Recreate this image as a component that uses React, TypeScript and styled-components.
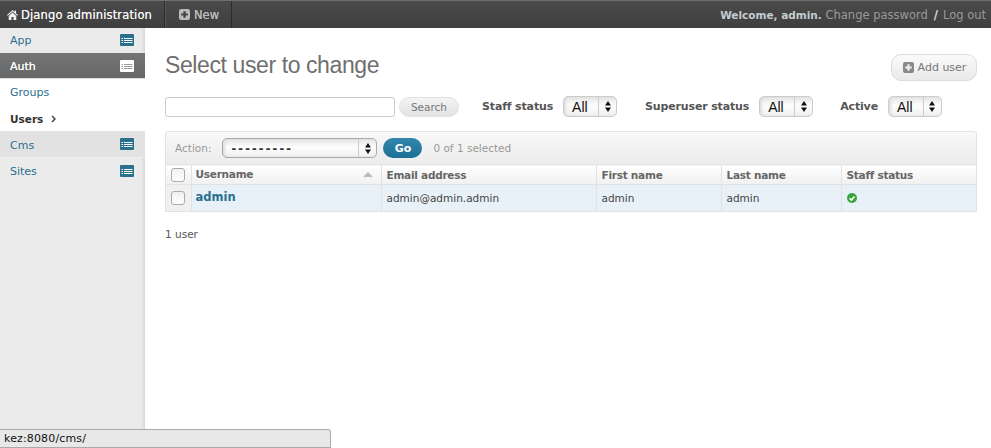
import styled, { createGlobalStyle } from 'styled-components';

const GlobalStyle = createGlobalStyle`
  html, body {
    margin: 0;
    padding: 0;
    height: 100%;
    background: #fff;
    overflow: hidden;
  }
  #root {
    height: 100%;
  }
  * {
    box-sizing: border-box;
  }
`;

const Page = styled.div`
  width: 991px;
  height: 448px;
  position: relative;
  overflow: hidden;
  display: flex;
  flex-direction: column;
  font-family: 'DejaVu Sans', Verdana, sans-serif;
  font-size: 11px;
  color: #444;
`;

const TopBar = styled.header`
  height: 28px;
  flex: none;
  display: flex;
  align-items: center;
  background: linear-gradient(#4a4a4a, #3f3f3f);
  border-top: 1px solid #6e6e6e;
  color: #eee;
`;

const Brand = styled.div`
  width: 165px;
  height: 100%;
  padding-left: 7px;
  display: flex;
  align-items: center;
  gap: 3px;
  font-size: 11.5px;
  letter-spacing: 0.15px;
  color: #f4f4f4;
  text-shadow: 0 0 0.6px #f4f4f4;
  border-right: 1px solid #2b2b2b;
`;

const NewLink = styled.div`
  width: 67px;
  height: 100%;
  display: flex;
  align-items: center;
  gap: 4px;
  padding-left: 13px;
  font-size: 11.5px;
  color: #bbb;
  text-shadow: 0 0 0.5px #bbb;
  border-left: 1px solid #555;
  border-right: 1px solid #2b2b2b;
`;

const UserTools = styled.div`
  margin-left: auto;
  padding-right: 5px;
  font-size: 11.5px;
  color: #999;
  white-space: nowrap;
`;

const Welcome = styled.span`
  font-weight: 700;
  color: #c4ccd0;
  font-size: 10.5px;
`;

const Slash = styled.span`
  color: #ddd;
  font-weight: 700;
  margin: 0 5px 0 6px;
`;

const Body = styled.div`
  flex: 1;
  display: flex;
  min-height: 0;
`;

const Sidebar = styled.nav`
  width: 145px;
  flex: none;
  background: #ebebeb;
  box-shadow: inset -4px 0 4px -3px #ccc;
`;

const NavRow = styled.div<{ $kind?: 'active' | 'child' | 'hover' }>`
  height: ${(p) => (p.$kind === 'hover' ? 27 : 26)}px;
  display: flex;
  align-items: center;
  justify-content: space-between;
  padding: 2px 11px 0 10px;
  font-size: 11px;
  color: ${(p) => (p.$kind === 'active' ? '#fff' : '#29708f')};
  text-shadow: ${(p) => (p.$kind === 'active' ? '0 0 0.5px #fff' : 'none')};
  background: ${(p) =>
    p.$kind === 'active'
      ? 'linear-gradient(#757575, #666)'
      : p.$kind === 'child'
        ? '#fff'
        : p.$kind === 'hover'
          ? '#e2e2e2'
          : 'transparent'};
  border-bottom: 1px solid
    ${(p) => (p.$kind === 'active' ? '#ddd' : p.$kind === 'hover' ? '#eee' : 'transparent')};
  & > svg {
    margin-top: -2px;
  }
  &:first-child {
    height: 25px;
    padding-top: 0;
  }
  &:first-child > svg {
    margin-top: 0;
  }
`;

const CurrentLink = styled.span`
  display: flex;
  align-items: center;
  gap: 8px;
  font-weight: 700;
  color: #333;
  font-size: 10.5px;
`;

const Content = styled.main`
  flex: 1;
  padding: 26px 14px 0 20px;
`;

const TitleRow = styled.div`
  display: flex;
  justify-content: space-between;
  align-items: flex-start;
  height: 42px;
`;

const Title = styled.h1`
  margin: 0;
  font-family: 'Liberation Sans', Arial, sans-serif;
  font-weight: 400;
  font-size: 23px;
  line-height: 22px;
  color: #6f6f6f;
  letter-spacing: -0.4px;
`;

const AddButton = styled.div`
  width: 86px;
  height: 27px;
  display: flex;
  align-items: center;
  justify-content: center;
  gap: 4px;
  padding-left: 1px;
  border: 1px solid #ddd;
  border-radius: 10px;
  background: linear-gradient(#fbfbfb, #e9e9e9);
  color: #777;
  font-size: 11px;
`;

const FilterRow = styled.div`
  height: 21px;
  display: flex;
  align-items: center;
  margin-bottom: 14px;
`;

const SearchInput = styled.input`
  width: 230px;
  height: 20px;
  border: 1px solid #ccc;
  border-radius: 3px;
  background: #fff;
  padding: 0 4px;
`;

const SearchButton = styled.div`
  width: 60px;
  height: 20px;
  margin-left: 4px;
  display: flex;
  align-items: center;
  justify-content: center;
  border-radius: 10px;
  border: 1px solid #e2e2e2;
  background: linear-gradient(#f4f4f4, #e2e2e2);
  color: #777;
  font-size: 10.5px;
`;

const FilterLabel = styled.span<{ $gap: number }>`
  margin-left: ${(p) => p.$gap}px;
  margin-right: 10px;
  font-weight: 700;
  font-size: 11px;
  letter-spacing: -0.15px;
  color: #555;
  white-space: nowrap;
`;

const SelectBox = styled.div`
  width: 54px;
  height: 21px;
  display: flex;
  align-items: stretch;
  border: 1px solid #ccc;
  border-radius: 5px;
  background: linear-gradient(#e4e4e4, #fdfdfd 45%, #f0f0f0);
  box-shadow: inset 2px 0 3px #ddd;
  font-family: 'Liberation Sans', Arial, sans-serif;
  font-size: 14px;
  color: #111;
`;

const SelectValue = styled.span`
  flex: 1;
  display: flex;
  align-items: center;
  padding-left: 8px;
  white-space: nowrap;
  overflow: hidden;
`;

const SelectArrows = styled.span`
  width: 18px;
  flex: none;
  display: flex;
  align-items: center;
  justify-content: center;
  border-left: 1px solid #ccc;
`;

const ActionSelect = styled(SelectBox)`
  width: 155px;
  height: 20px;
  border-color: #aaa;
  margin: 0 6px 0 11px;
`;

const DashValue = styled(SelectValue)`
  font-size: 14px;
  font-weight: 700;
  letter-spacing: 2.2px;
  color: #333;
`;

const Results = styled.div`
  border: 1px solid #e2e2e2;
  border-top: none;
  border-radius: 4px 4px 0 0;
`;

const ActionBar = styled.div`
  height: 33px;
  display: flex;
  align-items: center;
  padding-left: 9px;
  border-top: 1px solid #e2e2e2;
  border-radius: 4px 4px 0 0;
  background: linear-gradient(#f8f8f8, #ececec);
  color: #999;
  font-size: 10.5px;
`;

const GoButton = styled.div`
  width: 39px;
  height: 20px;
  display: flex;
  align-items: center;
  justify-content: center;
  border-radius: 10px;
  background: linear-gradient(#3386ad, #1d6f96);
  color: #fff;
  font-weight: 700;
  font-size: 11px;
`;

const Counter = styled.span`
  margin-left: 11px;
`;

const Table = styled.table`
  width: 100%;
  table-layout: fixed;
  border-collapse: collapse;
`;

const HeadCell = styled.th<{ $width: number }>`
  width: ${(p) => p.$width}px;
  height: 20px;
  padding: 0 0 0 5px;
  text-align: left;
  font-size: 10.5px;
  letter-spacing: -0.25px;
  font-weight: 700;
  color: #666;
  background: linear-gradient(#fff, #f0f0f0);
  border-left: 1px solid #e2e2e2;
  border-bottom: 1px solid #e2e2e2;
  border-top: 1px solid #e2e2e2;
  &:first-child {
    border-left: none;
  }
`;

const SortedHead = styled.span`
  display: flex;
  align-items: center;
  justify-content: space-between;
  margin: -1px 0 0 -1px;
  padding-right: 8px;
`;

const SortArrow = styled.span`
  width: 0;
  height: 0;
  border-left: 5px solid transparent;
  border-right: 5px solid transparent;
  border-bottom: 5px solid #bbb;
`;

const Cell = styled.td<{ $check?: boolean }>`
  height: 26px;
  padding: 0 0 0 5px;
  font-size: 10.5px;
  color: #444;
  background: ${(p) => (p.$check ? '#f0f0f0' : '#e8f1f8')};
  border-left: 1px solid #dde3e8;
  &:first-child {
    border-left: none;
  }
`;

const UserLink = styled.a`
  display: block;
  margin: -2px 0 0 -1px;
  color: #29708f;
  font-weight: 700;
  font-size: 11.5px;
`;

const Checkbox = styled.span`
  display: block;
  width: 14px;
  height: 14px;
  border: 1px solid #aaa;
  border-radius: 3px;
  background: linear-gradient(#f0f0f0, #fff);
`;

const Paginator = styled.p`
  margin: 16px 0 0 0;
  font-size: 10.5px;
  line-height: 13px;
  color: #555;
`;

const StatusBubble = styled.div`
  position: absolute;
  left: 0;
  bottom: 0;
  width: 331px;
  height: 19px;
  display: flex;
  align-items: center;
  padding-left: 4px;
  background: #e8e8e8;
  border-top: 1px solid #aaa;
  border-right: 1px solid #aaa;
  border-bottom: 1px solid #aaa;
  border-radius: 0 3px 0 0;
  font-size: 11px;
  letter-spacing: 0.15px;
  color: #111;
`;

function ListIcon({ inverted }: { inverted?: boolean }) {
  const bg = inverted ? '#fff' : '#29708f';
  const fg = inverted ? '#999' : '#fff';
  return (
    <svg width="14" height="12" viewBox="0 0 14 12">
      <rect width="14" height="12" rx="1" fill={bg} />
      {[4, 6, 8].map((y) => (
        <g key={y} fill={fg}>
          <rect x="1.5" y={y} width="1.5" height="1" />
          <rect x="4" y={y} width="8.5" height="1" />
        </g>
      ))}
    </svg>
  );
}

function HomeIcon() {
  return (
    <svg width="11" height="10" viewBox="0 0 11 10" fill="#f0f0f0">
      <path d="M5.5 0 0 5l.7.7L5.5 1.5l4.8 4.2.7-.7L9 3.2V.6H7.6v1.3z" />
      <path d="M1.7 6 5.5 2.6 9.3 6v4H6.5V7h-2v3H1.7z" />
    </svg>
  );
}

function PlusIcon({ color, knock }: { color: string; knock: string }) {
  return (
    <svg width="11" height="11" viewBox="0 0 10 10">
      <rect width="10" height="10" rx="2" fill={color} />
      <path d="M4 2h2v2h2v2H6v2H4V6H2V4h2z" fill={knock} />
    </svg>
  );
}

function Arrows() {
  return (
    <svg width="6" height="11" viewBox="0 0 6 11" fill="#111">
      <path d="M3 0 6 4.5H0zM3 11 0 6.5h6z" />
    </svg>
  );
}

function Chevron() {
  return (
    <svg width="5" height="8" viewBox="0 0 5 8" fill="none" stroke="#333" strokeWidth="1.3">
      <path d="M1 1l3 3-3 3" />
    </svg>
  );
}

function CheckIcon() {
  return (
    <svg width="10" height="10" viewBox="0 0 10 10" style={{ display: 'block' }}>
      <circle cx="5" cy="5" r="5" fill="#3aa53a" />
      <path d="M2.6 5.2 4.4 7l3-3.6" fill="none" stroke="#fff" strokeWidth="1.6" />
    </svg>
  );
}

function Filter({ label, gap }: { label: string; gap: number }) {
  return (
    <>
      <FilterLabel $gap={gap}>{label}</FilterLabel>
      <SelectBox>
        <SelectValue>All</SelectValue>
        <SelectArrows>
          <Arrows />
        </SelectArrows>
      </SelectBox>
    </>
  );
}

export default function App() {
  return (
    <Page>
      <GlobalStyle />
      <TopBar>
        <Brand>
          <HomeIcon />
          Django administration
        </Brand>
        <NewLink>
          <PlusIcon color="#bbb" knock="#444" />
          New
        </NewLink>
        <UserTools>
          <Welcome>Welcome, admin.</Welcome> Change password<Slash>/</Slash>Log out
        </UserTools>
      </TopBar>
      <Body>
        <Sidebar>
          <NavRow>
            App
            <ListIcon />
          </NavRow>
          <NavRow $kind="active">
            Auth
            <ListIcon inverted />
          </NavRow>
          <NavRow $kind="child">Groups</NavRow>
          <NavRow $kind="child">
            <CurrentLink>
              Users
              <Chevron />
            </CurrentLink>
          </NavRow>
          <NavRow $kind="hover">
            Cms
            <ListIcon />
          </NavRow>
          <NavRow>
            Sites
            <ListIcon />
          </NavRow>
        </Sidebar>
        <Content>
          <TitleRow>
            <Title>Select user to change</Title>
            <AddButton>
              <PlusIcon color="#888" knock="#eee" />
              Add user
            </AddButton>
          </TitleRow>
          <FilterRow>
            <SearchInput />
            <SearchButton>Search</SearchButton>
            <Filter label="Staff status" gap={23} />
            <Filter label="Superuser status" gap={28} />
            <Filter label="Active" gap={27} />
          </FilterRow>
          <Results>
            <ActionBar>
              Action:
              <ActionSelect>
                <DashValue>---------</DashValue>
                <SelectArrows>
                  <Arrows />
                </SelectArrows>
              </ActionSelect>
              <GoButton>Go</GoButton>
              <Counter>0 of 1 selected</Counter>
            </ActionBar>
            <Table>
              <thead>
                <tr>
                  <HeadCell $width={25}>
                    <Checkbox />
                  </HeadCell>
                  <HeadCell $width={190}>
                    <SortedHead>
                      Username
                      <SortArrow />
                    </SortedHead>
                  </HeadCell>
                  <HeadCell $width={215}>Email address</HeadCell>
                  <HeadCell $width={125}>First name</HeadCell>
                  <HeadCell $width={120}>Last name</HeadCell>
                  <HeadCell $width={135}>Staff status</HeadCell>
                </tr>
              </thead>
              <tbody>
                <tr>
                  <Cell $check>
                    <Checkbox />
                  </Cell>
                  <Cell>
                    <UserLink>admin</UserLink>
                  </Cell>
                  <Cell>admin@admin.admin</Cell>
                  <Cell>admin</Cell>
                  <Cell>admin</Cell>
                  <Cell>
                    <CheckIcon />
                  </Cell>
                </tr>
              </tbody>
            </Table>
          </Results>
          <Paginator>1 user</Paginator>
        </Content>
      </Body>
      <StatusBubble>kez:8080/cms/</StatusBubble>
    </Page>
  );
}
